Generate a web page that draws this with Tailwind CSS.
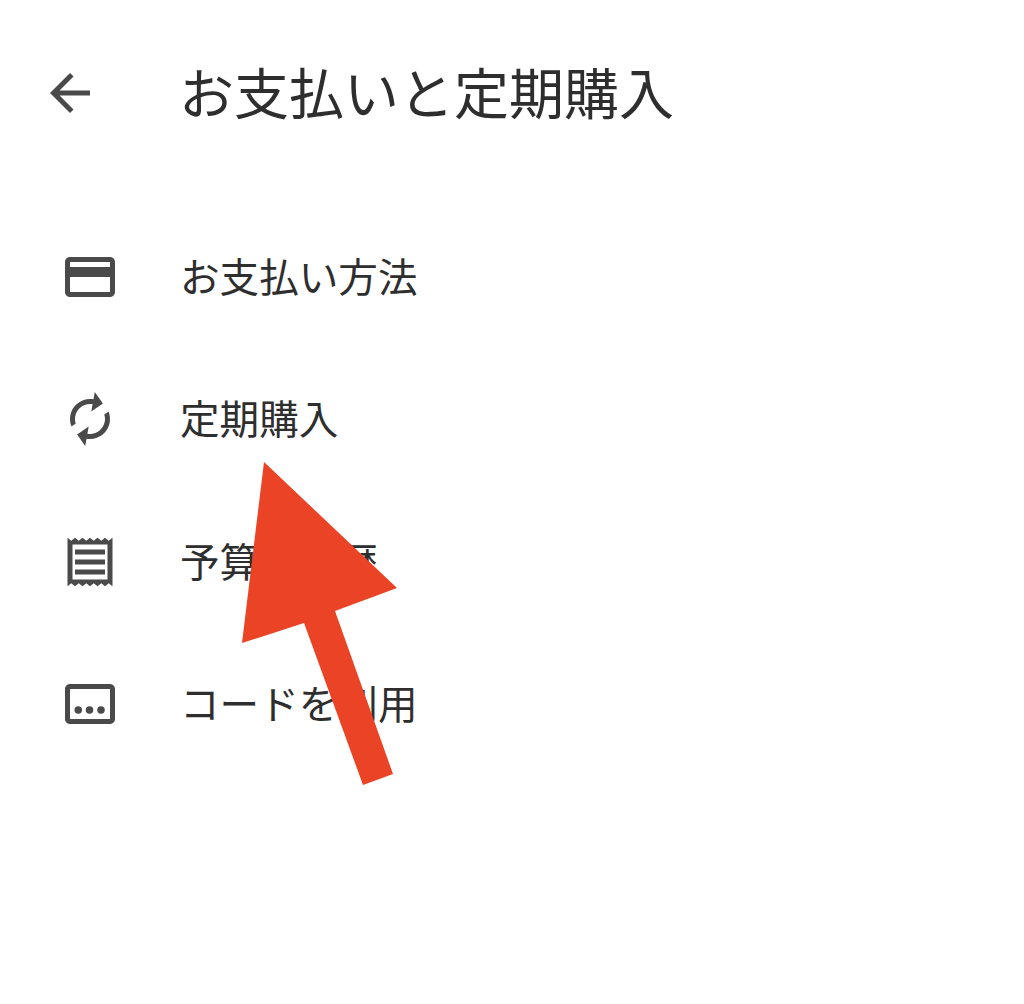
<!DOCTYPE html>
<html lang="ja">
<head>
    <meta charset="UTF-8">
    <title>お支払いと定期購入</title>
    <script src="https://cdn.jsdelivr.net/npm/@tailwindcss/browser@4"></script>
</head>
<body class="bg-white">
    <div class="relative w-[1024px] h-[1004px] overflow-hidden font-['Roboto','Noto_Sans_CJK_JP',sans-serif] text-[#2e2e2e]">
        <!-- Header -->
        <header class="flex items-center h-[60px] mt-[63px] pl-[40px]">
            <svg class="w-[60px] h-[60px] fill-[#4a4a4a]" viewBox="0 0 24 24"><path d="M20 11H7.83l5.59-5.59L12 4l-8 8 8 8 1.41-1.41L7.83 13H20v-2z"/></svg>
            <h1 class="ml-[79px] mt-[4px] text-[55px] leading-[60px] font-normal whitespace-nowrap">お支払いと定期購入</h1>
        </header>

        <!-- Menu -->
        <ul class="mt-[83px] flex flex-col">
            <li class="flex items-center h-[142.3px] pl-[60px]">
                <svg class="w-[60px] h-[60px] fill-[#4a4a4a]" viewBox="0 0 24 24"><path d="M20 4H4c-1.11 0-1.99.89-1.99 2L2 18c0 1.11.89 2 2 2h16c1.11 0 2-.89 2-2V6c0-1.11-.89-2-2-2zm0 14H4v-6h16v6zm0-10H4V6h16v2z"/></svg>
                <span class="ml-[60px] mt-[4px] text-[39.6px] leading-[60px] whitespace-nowrap">お支払い方法</span>
            </li>
            <li class="flex items-center h-[142.3px] pl-[60px]">
                <svg class="w-[60px] h-[60px] fill-[#4a4a4a]" viewBox="0 0 24 24"><path d="M12 6v3l4-4-4-4v3c-4.42 0-8 3.58-8 8 0 1.57.46 3.03 1.24 4.26L6.7 14.8c-.45-.83-.7-1.79-.7-2.8 0-3.31 2.69-6 6-6zm6.76 1.74L17.3 9.2c.44.84.7 1.79.7 2.8 0 3.31-2.69 6-6 6v-3l-4 4 4 4v-3c4.42 0 8-3.58 8-8 0-1.57-.46-3.03-1.24-4.26z" transform="rotate(10 12 12)"/></svg>
                <span class="ml-[60px] mt-[4px] text-[39.6px] leading-[60px] whitespace-nowrap">定期購入</span>
            </li>
            <li class="flex items-center h-[142.3px] pl-[60px]">
                <svg class="w-[60px] h-[60px] fill-[#4a4a4a]" viewBox="0 0 24 24"><path d="M21 2.300l-1.500 1.200L18 2.300 16.500 3.500 15 2.300 13.500 3.500 12 2.300 10.500 3.500 9 2.300 7.500 3.500 6 2.300 4.500 3.500 3 2.300v19.400L4.500 20.500 6 21.700 7.500 20.500 9 21.700 10.500 20.500 12 21.700 13.500 20.500 15 21.700 16.500 20.500 18 21.700 19.500 20.500 21 21.700V2.300zM19 19H5V5h14v14zM6 15h12v2H6zm0-4h12v2H6zm0-4h12v2H6z"/></svg>
                <span class="ml-[60px] mt-[4px] text-[39.6px] leading-[60px] whitespace-nowrap">予算と履歴</span>
            </li>
            <li class="flex items-center h-[142.3px] pl-[60px]">
                <svg class="w-[60px] h-[60px] fill-[#4a4a4a]" viewBox="0 0 24 24"><path d="M20 4H4c-1.100 0-2 .9-2 2v12c0 1.100.9 2 2 2h16c1.100 0 2-.9 2-2V6c0-1.100-.9-2-2-2zm0 14H4V6h16v12z"/><circle cx="7.300" cy="14.400" r="1.500"/><circle cx="11.800" cy="14.400" r="1.500"/><circle cx="16.400" cy="14.400" r="1.500"/></svg>
                <span class="ml-[60px] mt-[4px] text-[39.6px] leading-[60px] whitespace-nowrap">コードを利用</span>
            </li>
        </ul>

        <!-- Red annotation arrow -->
        <svg class="absolute left-0 top-0 w-[1024px] h-[1004px]" viewBox="0 0 1024 1004"><path fill="#ea4325" d="M264 462 397 588 335 611 393 774 363 785 304 623 242 643z"/></svg>
    </div>
</body>
</html>
